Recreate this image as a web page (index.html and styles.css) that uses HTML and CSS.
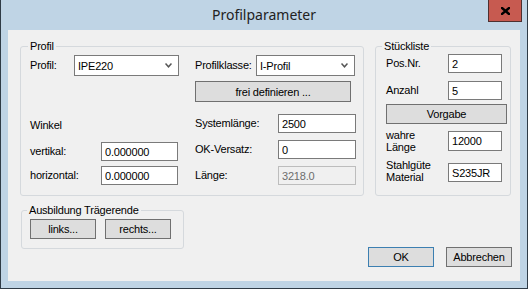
FILE: index.html
```html
<!DOCTYPE html>
<html lang="de">
<head>
  <meta charset="UTF-8">
  <title>Profilparameter</title>
  <link rel="stylesheet" href="styles.css">
</head>
<body>
  <div class="window">
    <div class="titlebar">
      <span class="title">Profilparameter</span>
      <button class="close" aria-label="Schließen">
        <svg width="9" height="8" viewBox="0 0 9 8"><path d="M1 1 L8 7 M8 1 L1 7" stroke="#000" stroke-width="2.4" stroke-linecap="square"/></svg>
      </button>
    </div>

    <div class="client">
      <div class="top-row">
        <!-- Profil -->
        <fieldset class="group group-profil">
          <legend>Profil</legend>
          <div class="profil-cols">
            <div class="col col-left">
              <div class="field">
                <label class="lbl w-profil">Profil:</label>
                <div class="select w-profil-sel">
                  <span>IPE220</span>
                  <svg width="7" height="5" viewBox="0 0 7 5"><path d="M0.5 0.5 L3.5 3.8 L6.5 0.5" fill="none" stroke="#555" stroke-width="1.5"/></svg>
                </div>
              </div>
              <div class="caption">Winkel</div>
              <div class="field f-vert">
                <label class="lbl w-winkel">vertikal:</label>
                <input class="edit w-winkel-in" type="text" value="0.000000">
              </div>
              <div class="field f-hor">
                <label class="lbl w-winkel">horizontal:</label>
                <input class="edit w-winkel-in" type="text" value="0.000000">
              </div>
            </div>

            <div class="col col-right">
              <div class="field">
                <label class="lbl w-klasse">Profilklasse:</label>
                <div class="select w-klasse-sel">
                  <span>I-Profil</span>
                  <svg width="7" height="5" viewBox="0 0 7 5"><path d="M0.5 0.5 L3.5 3.8 L6.5 0.5" fill="none" stroke="#555" stroke-width="1.5"/></svg>
                </div>
              </div>
              <button class="btn btn-frei">frei definieren ...</button>
              <div class="field f-system">
                <label class="lbl w-laenge">Systemlänge:</label>
                <input class="edit w-laenge-in" type="text" value="2500">
              </div>
              <div class="field f-next">
                <label class="lbl w-laenge">OK-Versatz:</label>
                <input class="edit w-laenge-in" type="text" value="0">
              </div>
              <div class="field f-next">
                <label class="lbl w-laenge">Länge:</label>
                <input class="edit w-laenge-in" type="text" value="3218.0" disabled>
              </div>
            </div>
          </div>
        </fieldset>

        <!-- Stückliste -->
        <fieldset class="group group-stueck">
          <legend>Stückliste</legend>
          <div class="field f-pos">
            <label class="lbl w-stueck">Pos.Nr.</label>
            <input class="edit w-stueck-in" type="text" value="2">
          </div>
          <div class="field f-anzahl">
            <label class="lbl w-stueck">Anzahl</label>
            <input class="edit w-stueck-in" type="text" value="5">
          </div>
          <button class="btn btn-vorgabe">Vorgabe</button>
          <div class="field f-wahre">
            <label class="lbl lbl-two w-stueck">wahre<br>Länge</label>
            <input class="edit edit-tall w-stueck-in" type="text" value="12000">
          </div>
          <div class="field f-stahl">
            <label class="lbl lbl-two w-stueck">Stahlgüte<br>Material</label>
            <input class="edit w-stueck-in" type="text" value="S235JR">
          </div>
        </fieldset>
      </div>

      <div class="bottom-row">
        <fieldset class="group group-ende">
          <legend>Ausbildung Trägerende</legend>
          <div class="ende-buttons">
            <button class="btn btn-small">links...</button>
            <button class="btn btn-small">rechts...</button>
          </div>
        </fieldset>
        <div class="dialog-buttons">
          <button class="btn btn-small btn-default">OK</button>
          <button class="btn btn-small">Abbrechen</button>
        </div>
      </div>
    </div>
  </div>
</body>
</html>
```

FILE: styles.css
```css
body {
  margin: 0;
  padding: 0;
  background-color: #bfd4e5;
  font-family: "Liberation Sans", Arial, sans-serif;
  font-size: 11px;
  letter-spacing: -0.2px;
  color: #000;
}

.window {
  position: relative;
  width: 528px;
  height: 289px;
  box-sizing: border-box;
  background-color: #bfd4e5;
  border-left: 1px solid #2f3b46;
  border-right: 1px solid #2f3b46;
  border-bottom: 1px solid #2f3b46;
}

.titlebar {
  height: 30px;
  display: flex;
  align-items: center;
  justify-content: center;
}

.title {
  font-family: "Noto Sans", "Open Sans", sans-serif;
  font-size: 14px;
  letter-spacing: 0;
  color: #222;
  margin-top: -1px;
}

.close {
  position: absolute;
  top: 0;
  right: 5px;
  width: 34px;
  height: 22px;
  padding: 0;
  background-color: #c75a50;
  border: 1px solid #4e3030;
  border-top: none;
  display: flex;
  align-items: center;
  justify-content: center;
}

.client {
  margin: 0 7px;
  width: 512px;
  height: 251px;
  box-sizing: border-box;
  background-color: #f0f0f0;
  padding: 10px 8px 0 12px;
}

/* group boxes */
.group {
  margin: 0;
  border: 1px solid #d5d9dd;
  border-radius: 3px;
  box-sizing: border-box;
  min-width: 0;
}

.group legend {
  padding: 0 2px;
  line-height: 13px;
}

.top-row {
  display: flex;
  align-items: stretch;
}

.group-profil {
  width: 344px;
  padding: 2px 0 10px 9px;
}

.group-profil legend {
  margin-left: -2px;
}

.group-stueck {
  width: 136px;
  margin-left: 11px;
  padding: 0 0 10px 10px;
}

.group-stueck legend {
  margin-left: -4px;
}

.profil-cols {
  display: flex;
}

.col {
  display: flex;
  flex-direction: column;
}

.col-left {
  width: 149px;
}

.col-right {
  width: 161px;
  margin-left: 16px;
}

.field {
  display: flex;
  align-items: center;
}

.lbl {
  flex: none;
  line-height: 13px;
}

.lbl-two {
  line-height: 12px;
}

.w-profil { width: 44px; }
.w-profil-sel { width: 105px; }
.w-klasse { width: 61px; }
.w-klasse-sel { width: 99px; }
.w-winkel { width: 71px; }
.w-winkel-in { width: 77px; }
.w-laenge { width: 83px; }
.w-laenge-in { width: 78px; }
.w-stueck { width: 62px; }
.w-stueck-in { width: 54px; }

.select {
  height: 21px;
  box-sizing: border-box;
  border: 1px solid #7a7a7a;
  background-color: #fff;
  display: flex;
  align-items: center;
  justify-content: space-between;
  padding: 0 6px 0 3px;
}

.edit {
  height: 19px;
  box-sizing: border-box;
  margin: 0;
  border: 1px solid #7a7a7a;
  background-color: #fff;
  padding: 0 3px;
  font-family: "Liberation Sans", Arial, sans-serif;
  font-size: 11px;
  letter-spacing: -0.2px;
  color: #000;
  outline: none;
}

.edit-tall {
  height: 20px;
}

.edit:disabled {
  background-color: #f0f0f0;
  border-color: #bdbdbd;
  color: #6d6d6d;
}

.caption {
  margin-top: 43px;
  line-height: 13px;
}

.f-vert { margin-top: 10px; }
.f-hor { margin-top: 5px; }
.f-system { margin-top: 12px; }
.f-next { margin-top: 7px; }

.btn {
  margin: 0;
  padding: 0;
  box-sizing: border-box;
  border: 1px solid #707070;
  background-color: #dddddd;
  font-family: "Liberation Sans", Arial, sans-serif;
  font-size: 11px;
  letter-spacing: -0.2px;
  color: #000;
  text-align: center;
}

.btn-frei {
  margin-top: 5px;
  width: 156px;
  height: 21px;
}

.f-pos { margin-top: 1px; }
.f-anzahl { margin-top: 8px; }

.btn-vorgabe {
  margin-top: 4px;
  width: 121px;
  height: 20px;
}

.f-wahre { margin-top: 5px; }
.f-stahl {
  margin-top: 6px;
  align-items: flex-end;
}

.f-stahl .edit {
  margin-bottom: 1px;
}

/* bottom part */
.bottom-row {
  display: flex;
  justify-content: space-between;
  align-items: flex-start;
  margin-top: 8px;
}

.group-ende {
  width: 163px;
  margin-left: 1px;
  padding: 2px 0 9px 8px;
}

.group-ende legend {
  margin-left: -3px;
}

.ende-buttons {
  display: flex;
  gap: 9px;
}

.btn-small {
  width: 66px;
  height: 20px;
}

.dialog-buttons {
  display: flex;
  gap: 12px;
  margin-top: 43px;
}

.btn-default {
  border-color: #3c7fb1;
}
```
